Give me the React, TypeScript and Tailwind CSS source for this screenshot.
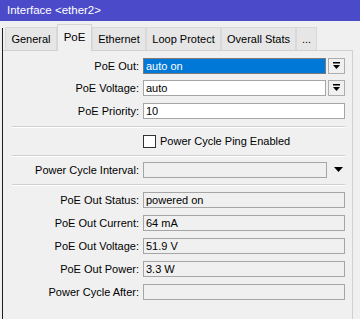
import React from "react";

function DropBtn() {
  return (
    <div className="w-[17px] h-[16px] border border-[#adadad] bg-[#f0f0f0] flex items-center justify-center shrink-0">
      <svg width="9" height="8" viewBox="0 0 9 8">
        <rect x="1" y="0" width="7" height="1.5" fill="#000" />
        <path d="M1 3 L8 3 L4.5 7 Z" fill="#000" />
      </svg>
    </div>
  );
}

function Row({ label, children, mt }: { label: string; children: React.ReactNode; mt: string }) {
  return (
    <div className={`flex items-center h-[16px] ${mt}`}>
      <div className="w-[137px] text-right pr-[1px] whitespace-nowrap">{label}</div>
      <div className="ml-[3px] flex items-center gap-[2px]">{children}</div>
    </div>
  );
}

function Sep({ mt }: { mt: string }) {
  return <div className={`ml-[9px] w-[333px] h-[2px] border-t border-[#d0d0d0] border-b border-b-white ${mt}`} />;
}

function RO({ value }: { value: string }) {
  return (
    <div className="w-[202px] h-[16px] border border-[#a5a5a5] bg-[#f0f0f0] pl-[2px] flex items-center leading-none whitespace-nowrap">
      {value}
    </div>
  );
}

export default function App() {
  const tabs = [
    { t: "General", w: "w-[52px]" },
    { t: "PoE", w: "w-[35px]", sel: true },
    { t: "Ethernet", w: "w-[54px]" },
    { t: "Loop Protect", w: "w-[75px]" },
    { t: "Overall Stats", w: "w-[75px]" },
    { t: "...", w: "w-[21px]" },
  ];
  return (
    <div className="w-[360px] h-[319px] bg-[#f0f0f0] overflow-hidden flex flex-col text-[11px] text-black font-['Liberation_Sans',Arial,sans-serif]">
      <div className="h-[21px] bg-[#4b4bc9] text-white flex items-center pl-[7px] shrink-0 text-[11.5px]">
        Interface &lt;ether2&gt;
      </div>
      <div className="flex-1 flex">
        <div className="w-[2px] shrink-0" />
        <div className="w-px shrink-0 mt-[7px] bg-[#1e1e1e]" />
        <div className="flex flex-col w-[350px]">
          <div className="h-[29px] flex items-end pl-[2px] relative z-10">
            {tabs.map((tb) =>
              tb.sel ? (
                <div
                  key={tb.t}
                  className={`${tb.w} h-[27px] -mb-px bg-[#f0f0f0] border border-b-0 border-[#d4d4d4] flex items-center justify-center text-[11.5px]`}
                >
                  {tb.t}
                </div>
              ) : (
                <div
                  key={tb.t}
                  className={`${tb.w} h-[23px] bg-[#e6e6e6] border border-b-0 border-[#d9d9d9] flex items-center justify-center whitespace-nowrap`}
                >
                  {tb.t}
                </div>
              )
            )}
          </div>
          <div className="flex-1 border-t border-r border-[#d0d0d0] bg-[#f0f0f0] flex flex-col">
            <Row label="PoE Out:" mt="mt-[7px]">
              <div className="w-[183px] h-[16px] border border-[#7a7a7a] bg-[#0078d7] text-white pl-[2px] flex items-center leading-none">
                auto on
              </div>
              <DropBtn />
            </Row>
            <Row label="PoE Voltage:" mt="mt-[6px]">
              <div className="w-[183px] h-[16px] border border-[#a5a5a5] bg-white pl-[2px] flex items-center leading-none">
                auto
              </div>
              <DropBtn />
            </Row>
            <Row label="PoE Priority:" mt="mt-[7px]">
              <div className="w-[202px] h-[16px] border border-[#a5a5a5] bg-white pl-[2px] flex items-center leading-none">
                10
              </div>
            </Row>
            <Sep mt="mt-[7px]" />
            <div className="flex items-center mt-[7px] ml-[140px] h-[13px]">
              <div className="w-[13px] h-[13px] border border-[#333] bg-white" />
              <span className="ml-[4px] whitespace-nowrap">Power Cycle Ping Enabled</span>
            </div>
            <Sep mt="mt-[7px]" />
            <Row label="Power Cycle Interval:" mt="mt-[5px]">
              <div className="w-[184px] h-[16px] border border-[#a5a5a5] bg-[#f0f0f0]" />
              <svg width="9" height="6" viewBox="0 0 9 6" className="ml-[5px]">
                <path d="M0 0 L9 0 L4.5 5 Z" fill="#000" />
              </svg>
            </Row>
            <Sep mt="mt-[6px]" />
            <Row label="PoE Out Status:" mt="mt-[6px]">
              <RO value="powered on" />
            </Row>
            <Row label="PoE Out Current:" mt="mt-[7px]">
              <RO value="64 mA" />
            </Row>
            <Row label="PoE Out Voltage:" mt="mt-[7px]">
              <RO value="51.9 V" />
            </Row>
            <Row label="PoE Out Power:" mt="mt-[7px]">
              <RO value="3.3 W" />
            </Row>
            <Row label="Power Cycle After:" mt="mt-[7px]">
              <RO value="" />
            </Row>
          </div>
        </div>
      </div>
    </div>
  );
}
